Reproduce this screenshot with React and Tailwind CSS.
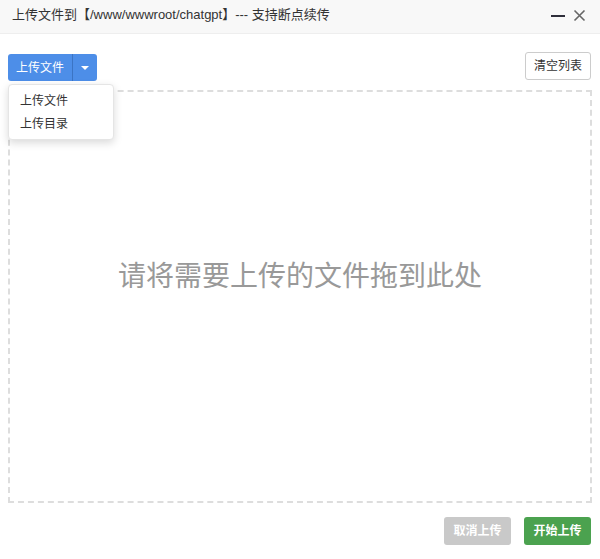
import React from 'react';

const font = { fontFamily: '"Liberation Sans", "Noto Sans CJK SC", sans-serif' };

export default function App() {
    return (
        <div className="w-[600px] h-[559px] bg-white relative overflow-hidden text-[#333]" style={font}>
            {/* Title bar */}
            <div className="h-[34px] bg-[#f8f8f8] border-b border-[#eee] flex items-center justify-between pl-[12px] pr-[14px]">
                <span className="text-[13px] text-[#333] mt-[-4px]">上传文件到【/www/wwwroot/chatgpt】--- 支持断点续传</span>
                <div className="flex items-center gap-[8px] mt-[-3px]">
                    <span className="block w-[14px] h-[2px] bg-[#2e2e3a] mt-[1px]" />
                    <svg width="13" height="13" viewBox="0 0 13 13">
                        <path d="M1.5 1.5 L11.5 11.5 M11.5 1.5 L1.5 11.5" stroke="#666" strokeWidth="1.6" />
                    </svg>
                </div>
            </div>

            {/* Toolbar */}
            <div className="flex justify-between items-start pl-[8px] pr-[9px] pt-[20px]">
                <div className="flex h-[27px] rounded-[3px] overflow-hidden bg-[#4d8ee8] text-white text-[12px]">
                    <button className="px-[8px] h-full flex items-center">上传文件</button>
                    <button className="w-[25px] h-full border-l border-[#3b74c4] flex items-center justify-center">
                        <span className="block w-0 h-0 border-l-[4px] border-r-[4px] border-t-[4px] border-l-transparent border-r-transparent border-t-white" />
                    </button>
                </div>
                <button className="h-[28px] px-[8px] mt-[-2px] border border-[#ccc] rounded-[3px] bg-white text-[12px] text-[#333]">清空列表</button>
            </div>

            {/* Drop zone */}
            <div className="mx-[8px] mt-[9px] h-[413px] border-2 border-dashed border-[#ddd] flex items-center justify-center">
                <span className="text-[28px] text-[#999] mt-[-40px]">请将需要上传的文件拖到此处</span>
            </div>

            {/* Footer */}
            <div className="flex justify-end gap-[13px] pr-[9px] pt-[14px]">
                <button className="h-[28px] w-[67px] flex items-center justify-center rounded-[3px] bg-[#c9c9c9] text-white text-[12px] font-bold">取消上传</button>
                <button className="h-[28px] w-[67px] flex items-center justify-center rounded-[3px] bg-[#4ba24f] text-white text-[12px] font-bold">开始上传</button>
            </div>

            {/* Dropdown menu */}
            <div className="absolute left-[8px] top-[84px] w-[106px] bg-white border border-[#e5e5e5] rounded-[4px] shadow-[0_3px_8px_rgba(0,0,0,0.15)] py-[4px] text-[12px] text-[#333]">
                <div className="px-[11px] h-[23px] flex items-center">上传文件</div>
                <div className="px-[11px] h-[23px] flex items-center">上传目录</div>
            </div>
        </div>
    );
}
